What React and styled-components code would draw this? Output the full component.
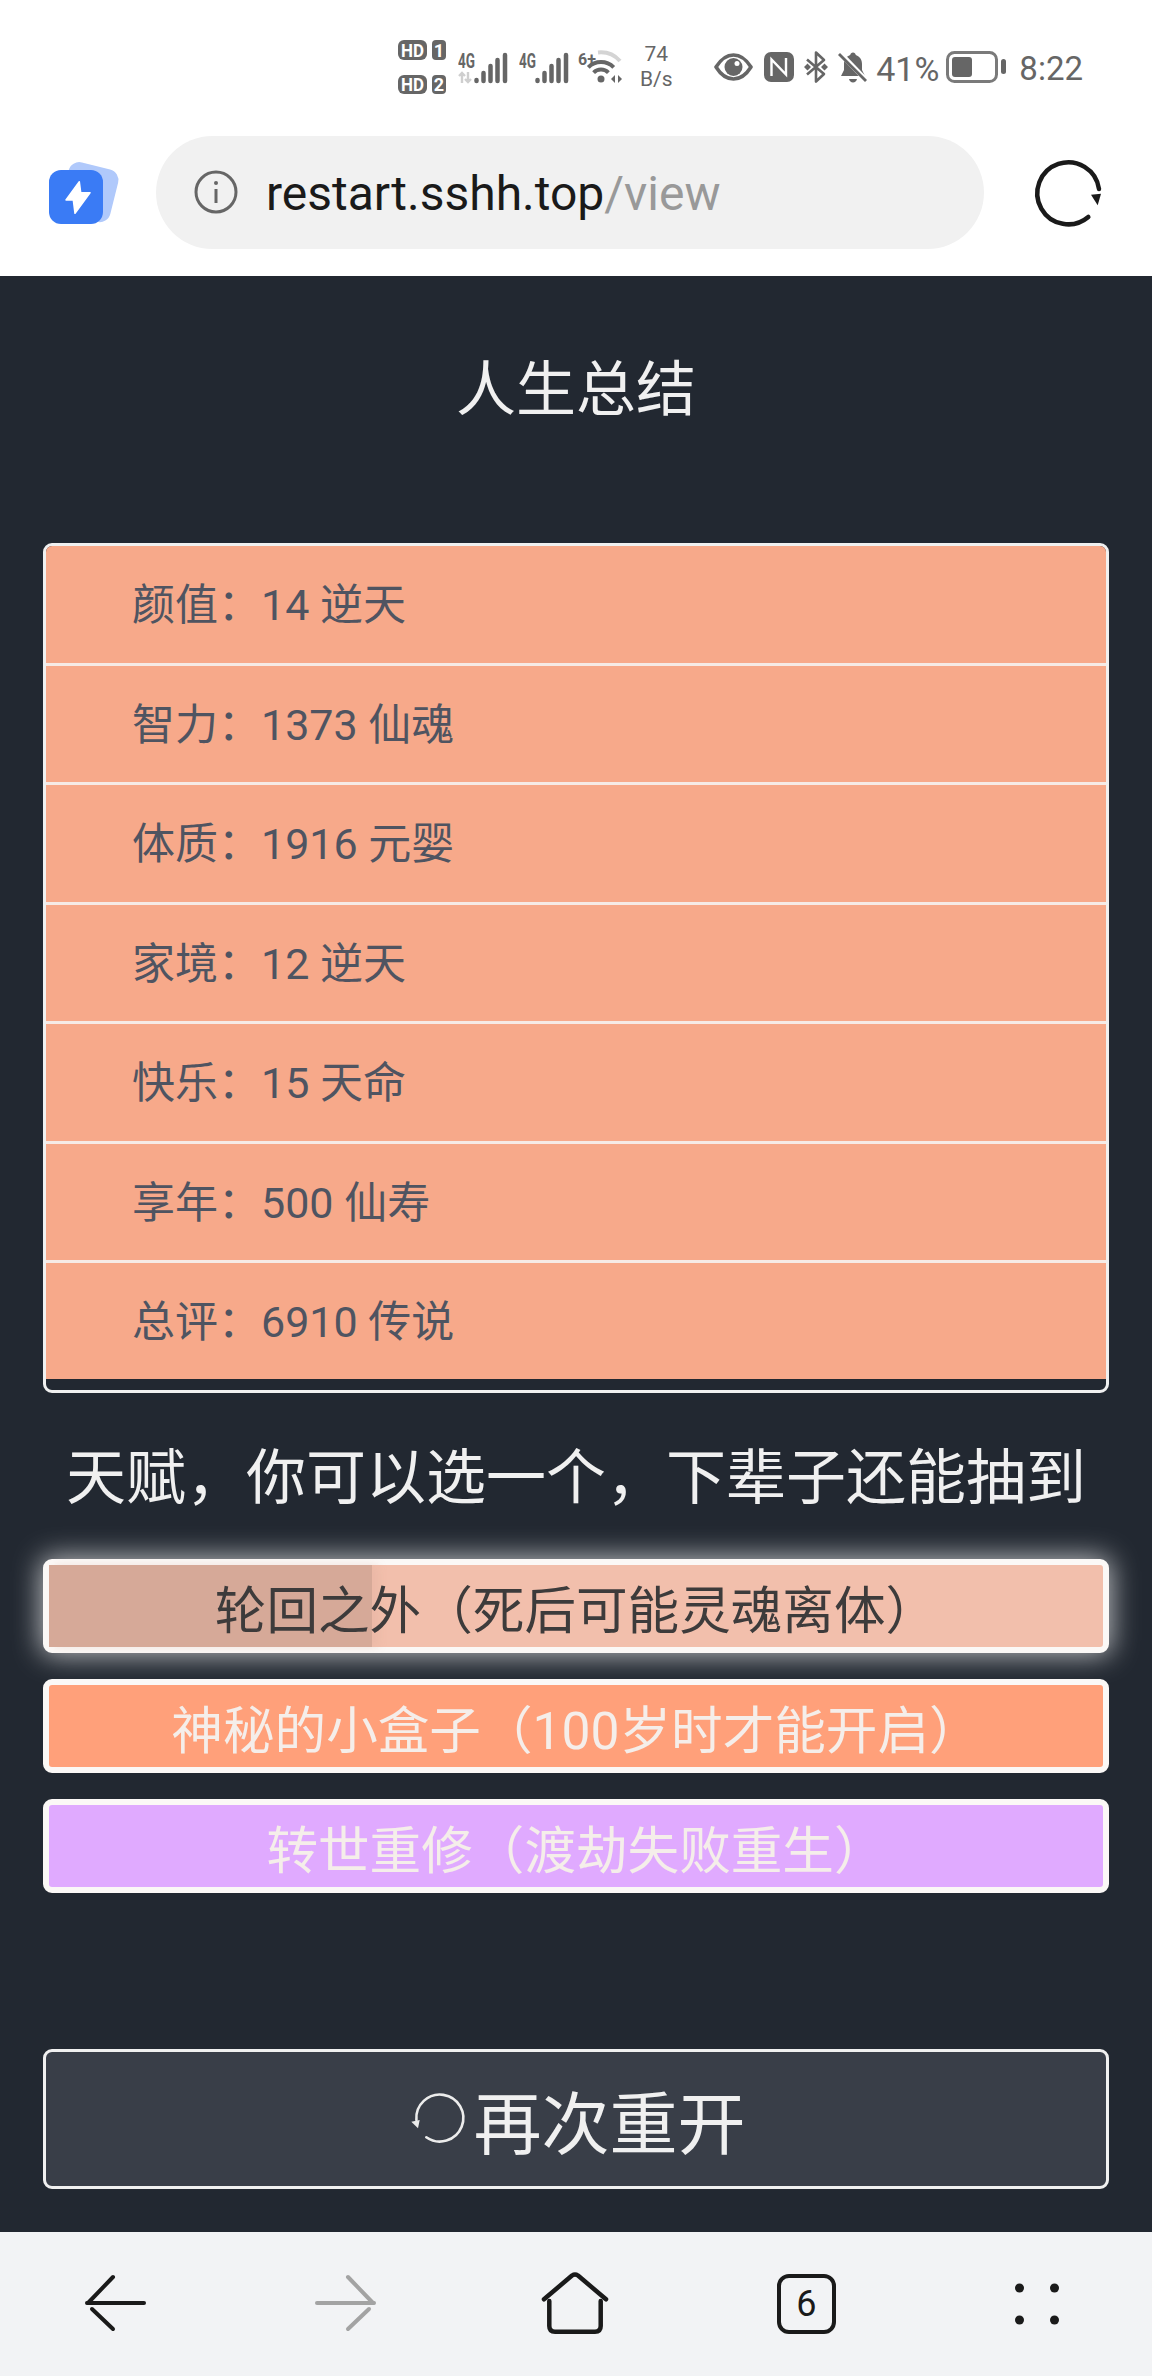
import React from "react";
import styled, { createGlobalStyle } from "styled-components";

const FONT = `Roboto, "Noto Sans CJK SC", "Noto Sans", sans-serif`;
const ICON_GRAY = "#666666";

const stats = [
  "颜值：14 逆天",
  "智力：1373 仙魂",
  "体质：1916 元婴",
  "家境：12 逆天",
  "快乐：15 天命",
  "享年：500 仙寿",
  "总评：6910 传说",
];

const talents = [
  { id: 1, label: "轮回之外（死后可能灵魂离体）", selected: true },
  { id: 2, label: "神秘的小盒子（100岁时才能开启）", color: "#ffa07a" },
  { id: 3, label: "转世重修（渡劫失败重生）", color: "#e0aaff" },
];

const HdBadges = () => (
  <svg width="48" height="54" viewBox="0 0 48 54">
    <rect x="0" y="0" width="29" height="20" rx="6" fill={ICON_GRAY} />
    <rect x="34" y="0" width="14" height="20" rx="4" fill={ICON_GRAY} />
    <rect x="0" y="35" width="29" height="19" rx="6" fill={ICON_GRAY} />
    <rect x="34" y="35" width="14" height="19" rx="4" fill={ICON_GRAY} />
    <g fill="#fff" fontFamily="Roboto" fontWeight="700" fontSize="18" textAnchor="middle">
      <text x="14.5" y="16.500" textLength="23" lengthAdjust="spacingAndGlyphs">HD</text>
      <text x="41" y="16.500">1</text>
      <text x="14.5" y="51" textLength="23" lengthAdjust="spacingAndGlyphs">HD</text>
      <text x="41" y="51">2</text>
    </g>
  </svg>
);

const Signal = ({ arrows }) => (
  <svg width="50" height="40" viewBox="0 -5 50 40">
    <text x="0" y="16" fontFamily="Roboto" fontWeight="700" fontSize="21" fill={ICON_GRAY} textLength="17" lengthAdjust="spacingAndGlyphs">4G</text>
    <g stroke={ICON_GRAY} strokeWidth="4.5" strokeLinecap="round">
      <path d="M18.5 29v-1" />
      <path d="M25.5 29v-8" />
      <path d="M32.5 29v-15" />
      <path d="M39.5 29v-21" />
      <path d="M47 29v-26" />
    </g>
    {arrows && (
      <g fill="none" stroke="#cfcfcf" strokeWidth="2.4">
        <path d="M4 31V21M1 24l3-3 3 3" />
        <path d="M10 20v10M7 27l3 3 3-3" />
      </g>
    )}
  </svg>
);

const Wifi = () => (
  <svg width="46" height="36" viewBox="0 0 46 36">
    <text x="0" y="15.500" fontFamily="Roboto" fontWeight="700" fontSize="16" fill={ICON_GRAY}>6+</text>
    <path d="M20 3.500A26 26 0 0 1 42 12" fill="none" stroke="#d4d4d4" strokeWidth="4" />
    <path d="M10.300 18.300A18 18 0 0 1 35.700 18.300" fill="none" stroke={ICON_GRAY} strokeWidth="4" />
    <path d="M15.600 23.600A10.500 10.500 0 0 1 30.400 23.600" fill="none" stroke={ICON_GRAY} strokeWidth="4" />
    <circle cx="23" cy="30" r="3.500" fill={ICON_GRAY} />
    <path d="M33 30l4-4v8zM40 26l4 4-4 4z" fill={ICON_GRAY} />
  </svg>
);

const Eye = () => (
  <svg width="39" height="28" viewBox="0 0 39 28">
    <path d="M2 14C7 6 13 2 19.500 2S32 6 37 14C32 22 26 26 19.500 26S7 22 2 14Z" fill="none" stroke={ICON_GRAY} strokeWidth="3.600" strokeLinejoin="round" />
    <circle cx="19.500" cy="14" r="9" fill={ICON_GRAY} />
    <circle cx="23" cy="10.500" r="2.500" fill="#fff" />
  </svg>
);

const Nfc = () => (
  <svg width="30" height="30" viewBox="0 0 30 30">
    <rect width="30" height="30" rx="7" fill={ICON_GRAY} />
    <path d="M7.500 24V7.500L22 22.500V6" fill="none" stroke="#fff" strokeWidth="2.400" />
  </svg>
);

const Bluetooth = () => (
  <svg width="24" height="34" viewBox="0 0 24 34">
    <path d="M3 9.500L20 24 12 31.500V2.500L20 10 3 24.500" fill="none" stroke={ICON_GRAY} strokeWidth="2.600" strokeLinejoin="round" />
    <path d="M0 17l3.500-3.500L7 17l-3.500 3.500zM17 17l3.500-3.500L24 17l-3.500 3.500z" fill={ICON_GRAY} />
  </svg>
);

const BellOff = () => (
  <svg width="30" height="31" viewBox="0 0 30 31">
    <path d="M15 0.500c1.500 0 2.500 1 2.800 2.500C22 4.500 24 8 24 12v6l3 6H3l3-6v-6c0-4 2-7.500 6.200-9C12.500 1.500 13.500 0.500 15 0.500Z" fill={ICON_GRAY} />
    <path d="M11 27h8c-.500 2.200-2 3.500-4 3.500s-3.500-1.300-4-3.500Z" fill={ICON_GRAY} />
    <path d="M2 1l26 27" stroke="#fff" strokeWidth="5" />
    <path d="M1 2l27 27" stroke={ICON_GRAY} strokeWidth="2.800" />
  </svg>
);

const Battery = () => (
  <svg width="60" height="32" viewBox="0 0 60 32">
    <rect x="1.500" y="1.500" width="49" height="29" rx="7" fill="none" stroke="#7a7a7a" strokeWidth="3" />
    <rect x="6" y="6" width="20" height="20" rx="3" fill={ICON_GRAY} />
    <rect x="55" y="8" width="5" height="15" rx="2.500" fill={ICON_GRAY} />
  </svg>
);

const Logo = () => (
  <svg width="80" height="72" viewBox="0 0 80 72">
    <rect x="20" y="9" width="51" height="54" rx="11" fill="#b0c9fb" transform="rotate(14 45 36)" />
    <rect x="5" y="14" width="54" height="54" rx="12" fill="#3a7bf5" />
    <path d="M35.300 25.700L22 44H29.300L31 57.300L46 36.700H36.700Z" fill="#fff" stroke="#fff" strokeWidth="1.500" strokeLinejoin="round" />
  </svg>
);

const InfoIcon = () => (
  <svg width="44" height="44" viewBox="0 0 44 44">
    <circle cx="22" cy="22" r="20" fill="none" stroke="#666" strokeWidth="3" />
    <circle cx="22" cy="13" r="2" fill="#666" />
    <path d="M22 19v14" stroke="#666" strokeWidth="3" />
  </svg>
);

const ReloadIcon = () => (
  <svg width="80" height="80" viewBox="0 0 80 80">
    <path d="M58.300 65A31 31 0 1 1 69 37" fill="none" stroke="#1a1a1a" strokeWidth="4.500" strokeLinecap="round" />
    <path d="M61 42.700L71 41.700 67.700 53.300Z" fill="#1a1a1a" />
  </svg>
);

const RestartIcon = () => (
  <svg width="60" height="60" viewBox="0 0 60 60">
    <path d="M16.300 48.300A23.500 23.500 0 1 0 6.400 31" fill="none" stroke="#ececec" strokeWidth="2.600" strokeLinecap="round" />
    <path d="M1.300 32.700L9.700 31 8 39.300Z" fill="#ececec" />
  </svg>
);

const BackArrow = ({ color, flip }) => (
  <svg width="70" height="70" viewBox="0 0 70 70" style={flip ? { transform: "scaleX(-1)" } : undefined}>
    <g fill="none" stroke={color} strokeWidth="4" strokeLinecap="round">
      <path d="M33 8L8 34" />
      <path d="M7 34H64" />
      <path d="M12 40L33 60" />
    </g>
  </svg>
);

const HomeIcon = () => (
  <svg width="70" height="70" viewBox="1 0 70 70">
    <g fill="none" stroke="#1a1a1a" strokeWidth="4.500" strokeLinecap="round" strokeLinejoin="round">
      <path d="M4 30.300L32 6.500Q35 4.500 38 6.500L66 30.300" />
      <path d="M9.300 32V57Q9.300 62.700 15 62.700H55Q60.700 62.700 60.700 57V32" />
    </g>
  </svg>
);

const MenuDots = () => (
  <svg width="44" height="44" viewBox="0 0 44 44">
    <g fill="#1a1a1a">
      <circle cx="4.500" cy="6" r="4.500" />
      <circle cx="39.500" cy="6" r="4.500" />
      <circle cx="4.500" cy="38" r="4.500" />
      <circle cx="39.500" cy="38" r="4.500" />
    </g>
  </svg>
);

const App = () => {
  return (
    <Page>
      <GlobalStyle />
      <StatusBar>
        <StatusSlot><HdBadges /></StatusSlot>
        <StatusSlot $ml={12}><Signal arrows /></StatusSlot>
        <StatusSlot $ml={11}><Signal /></StatusSlot>
        <StatusSlot $ml={9}><Wifi /></StatusSlot>
        <NetSpeed>
          <span>74</span>
          <span>B/s</span>
        </NetSpeed>
        <StatusSlot $ml={40}><Eye /></StatusSlot>
        <StatusSlot $ml={11}><Nfc /></StatusSlot>
        <StatusSlot $ml={10}><Bluetooth /></StatusSlot>
        <StatusSlot $ml={10}><BellOff /></StatusSlot>
        <StatusText $ml={8}>41%</StatusText>
        <StatusSlot $ml={7}><Battery /></StatusSlot>
        <StatusText $ml={13} $size={33}>8:22</StatusText>
      </StatusBar>

      <Toolbar>
        <Logo />
        <UrlPill>
          <InfoIcon />
          <UrlText>
            restart.sshh.top<UrlPath>/view</UrlPath>
          </UrlText>
        </UrlPill>
        <ReloadIcon />
      </Toolbar>

      <Main>
        <Title>人生总结</Title>
        <SummaryPanel>
          {stats.map((stat) => (
            <SummaryRow key={stat}>{stat}</SummaryRow>
          ))}
        </SummaryPanel>
        <Subtitle>天赋，你可以选一个，下辈子还能抽到</Subtitle>
        <TalentList>
          {talents.map((talent) => (
            <TalentButton key={talent.id} $selected={talent.selected} $color={talent.color}>
              <span>{talent.label}</span>
            </TalentButton>
          ))}
        </TalentList>
        <RestartButton>
          <RestartIcon />
          再次重开
        </RestartButton>
      </Main>

      <BottomNav>
        <NavItem><BackArrow color="#1a1a1a" /></NavItem>
        <NavItem><BackArrow color="#a3a3a3" flip /></NavItem>
        <NavItem><HomeIcon /></NavItem>
        <NavItem><TabCount>6</TabCount></NavItem>
        <NavItem><MenuDots /></NavItem>
      </BottomNav>
    </Page>
  );
};

const GlobalStyle = createGlobalStyle`
  html, body {
    margin: 0;
    padding: 0;
    background: #222831;
  }
  * {
    box-sizing: border-box;
  }
`;

const Page = styled.div`
  width: 1152px;
  height: 2376px;
  display: flex;
  flex-direction: column;
  overflow: hidden;
  font-family: ${FONT};
  background: #222831;
`;

const StatusBar = styled.div`
  height: 112px;
  padding: 22px 69px 0 0;
  background: #fff;
  display: flex;
  align-items: center;
  justify-content: flex-end;
  color: ${ICON_GRAY};
`;

const StatusSlot = styled.div`
  display: flex;
  margin-left: ${(p) => p.$ml || 0}px;
`;

const StatusText = styled.div`
  margin-left: ${(p) => p.$ml || 0}px;
  padding-top: 3px;
  font-size: ${(p) => p.$size || 34}px;
  line-height: 40px;
`;

const NetSpeed = styled.div`
  width: 36px;
  margin-left: 14px;
  display: flex;
  flex-direction: column;
  align-items: center;
  font-size: 21px;
  line-height: 25px;
`;

const Toolbar = styled.div`
  height: 164px;
  padding: 0 42px 4px 44px;
  background: #fff;
  display: flex;
  align-items: center;

  svg {
    flex-shrink: 0;
  }
`;

const UrlPill = styled.div`
  flex-shrink: 0;
  width: 828px;
  height: 113px;
  margin: 0 46px 0 32px;
  padding-left: 38px;
  border-radius: 57px;
  background: #f1f1f1;
  display: flex;
  align-items: center;
  gap: 28px;
`;

const UrlText = styled.div`
  padding-top: 3px;
  font-size: 48px;
  color: #1a1a1a;
`;

const UrlPath = styled.span`
  color: #999;
`;

const Main = styled.main`
  flex: 1;
  padding: 0 43px;
  display: flex;
  flex-direction: column;
`;

const Title = styled.h1`
  margin: 85px 0 122px;
  font-size: 60px;
  line-height: 60px;
  font-weight: 400;
  text-align: center;
  color: #f0f0f0;
`;

const SummaryPanel = styled.div`
  height: 850px;
  border: 3px solid #f0f0f0;
  border-radius: 9px;
  overflow: hidden;
`;

const SummaryRow = styled.div`
  height: 119.5px;
  padding: 0 0 6px 86px;
  display: flex;
  align-items: center;
  font-size: 43px;
  color: #4f5461;
  background: #f7a98a;
  border-bottom: 3px solid #f6ebe6;

  &:last-child {
    height: 116px;
    border-bottom: none;
  }
`;

const Subtitle = styled.h2`
  margin: 56px 0 50px;
  font-size: 60px;
  line-height: 60px;
  font-weight: 400;
  text-align: center;
  white-space: nowrap;
  color: #f0f0f0;
`;

const TalentList = styled.div`
  display: flex;
  flex-direction: column;
  gap: 26px;
`;

const TalentButton = styled.div`
  position: relative;
  height: 94px;
  border: 6px solid #fbf8f6;
  border-radius: 9px;
  display: flex;
  align-items: center;
  justify-content: center;
  font-size: 51.6px;
  overflow: ${(p) => (p.$selected ? "visible" : "hidden")};
  color: ${(p) => (p.$selected ? "#3d3b3b" : "#f5eeea")};
  background: ${(p) => (p.$selected ? "#f2bfac" : p.$color)};
  box-shadow: ${(p) => (p.$selected ? "0 0 28px 2px rgba(255, 255, 255, 0.7)" : "none")};

  span {
    position: relative;
  }

  &::before {
    content: "";
    display: ${(p) => (p.$selected ? "block" : "none")};
    position: absolute;
    left: 0;
    top: 0;
    bottom: 0;
    width: 323px;
    background: #d6a998;
    box-shadow: 6px 0 8px rgba(214, 169, 152, 0.25);
  }
`;

const RestartButton = styled.div`
  height: 140px;
  margin-top: 156px;
  padding-left: 4px;
  border: 3px solid #f0f0f0;
  border-radius: 9px;
  background: #393e48;
  display: flex;
  align-items: center;
  justify-content: center;
  gap: 3px;
  font-size: 68px;
  color: #f0f0f0;
`;

const BottomNav = styled.nav`
  height: 144px;
  background: #f2f3f5;
  display: grid;
  grid-template-columns: repeat(5, 1fr);
`;

const NavItem = styled.div`
  display: flex;
  align-items: center;
  justify-content: center;
`;

const TabCount = styled.div`
  width: 59px;
  height: 60px;
  border: 4.5px solid #1a1a1a;
  border-radius: 12px;
  display: flex;
  align-items: center;
  justify-content: center;
  font-size: 36px;
  font-weight: 400;
  color: #1a1a1a;
`;

export default App;
